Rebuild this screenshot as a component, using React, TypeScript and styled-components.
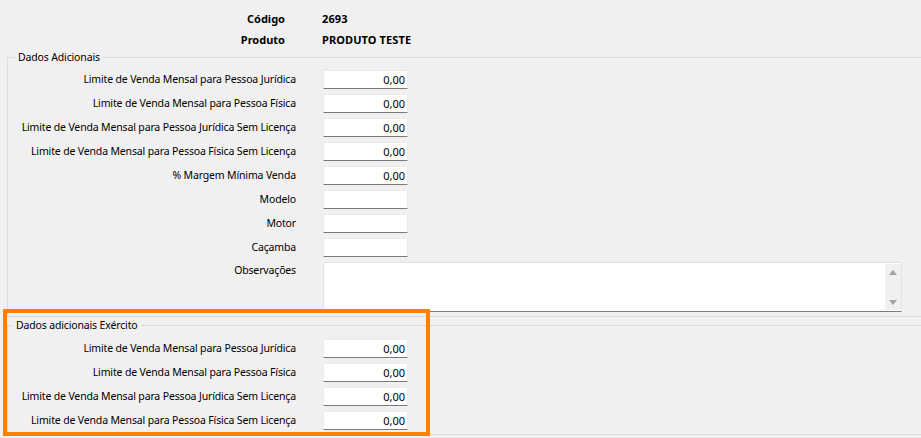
import React from "react";
import styled, { createGlobalStyle } from "styled-components";

const Global = createGlobalStyle`
  html, body { margin: 0; padding: 0; background: #f0f0f0; }
  body {
    font-family: "Segoe UI", "Noto Sans", "DejaVu Sans", sans-serif;
    font-size: 11px;
    color: #000;
  }
`;

const Page = styled.div`
  position: relative;
  width: 921px;
  height: 438px;
  overflow: hidden;
  background: #f0f0f0;
`;

const Header = styled.div`
  display: grid;
  grid-template-columns: 285px auto;
  column-gap: 37px;
  grid-auto-rows: 21px;
  align-items: center;
  padding-top: 8px;
  font-weight: bold;
  font-size: 11px;
`;

const HeaderLabel = styled.div`
  text-align: right;
`;

const HeaderValue = styled.div`
  text-align: left;
  letter-spacing: 0.1px;
`;

const Group = styled.fieldset<{ $mt: number; $pt: number }>`
  margin: ${(p) => p.$mt}px -40px 0 7px;
  padding: ${(p) => p.$pt}px 0 4px 0;
  border: 1px solid #dcdcdc;
  min-width: 0;
`;

const Legend = styled.legend<{ $ml: number }>`
  margin-left: ${(p) => p.$ml}px;
  padding: 0 3px;
  line-height: 14px;
  font-size: 10.5px;
  letter-spacing: -0.15px;
`;

const Form = styled.div`
  display: grid;
  grid-template-columns: 288px auto;
  column-gap: 27px;
  row-gap: 5px;
  align-items: center;
`;

const Label = styled.div<{ $top?: boolean }>`
  text-align: right;
  white-space: nowrap;
  font-size: 10.5px;
  letter-spacing: -0.15px;
  line-height: ${(p) => (p.$top ? "16px" : "19px")};
  align-self: ${(p) => (p.$top ? "start" : "center")};
`;

const TextBox = styled.div`
  box-sizing: border-box;
  width: 85px;
  height: 19px;
  background: #fff;
  border: 1px solid #ebebeb;
  border-bottom-color: #7a7a7a;
  padding: 0 2px 0 2px;
  text-align: right;
  line-height: 17px;
  font-size: 11px;
  white-space: nowrap;
`;

const Memo = styled.div`
  box-sizing: border-box;
  width: 579px;
  height: 50px;
  background: #fff;
  border: 1px solid #e3e3e3;
  border-bottom-color: #7a7a7a;
  display: flex;
  justify-content: flex-end;
  padding: 1px 0;
`;

const ScrollBar = styled.div`
  width: 16px;
  background: #f0f0f0;
  display: flex;
  flex-direction: column;
  justify-content: space-between;
  align-items: center;
  padding: 6px 0 5px;
  box-sizing: border-box;
`;

const Highlight = styled.div`
  position: absolute;
  left: 3px;
  top: 309px;
  width: 427px;
  height: 127px;
  box-sizing: border-box;
  border: 4px solid #ff8000;
  pointer-events: none;
`;

const Arrow = ({ down }: { down?: boolean }) => (
  <svg width="8" height="5" viewBox="0 0 8 5">
    <polygon points={down ? "0,0 8,0 4,5" : "4,0 8,5 0,5"} fill="#a3a3a3" />
  </svg>
);

type Field = { label: string; value?: string };

const dados: Field[] = [
  { label: "Limite de Venda Mensal para Pessoa Jurídica", value: "0,00" },
  { label: "Limite de Venda Mensal para Pessoa Física", value: "0,00" },
  { label: "Limite de Venda Mensal para Pessoa Jurídica Sem Licença", value: "0,00" },
  { label: "Limite de Venda Mensal para Pessoa Física Sem Licença", value: "0,00" },
  { label: "% Margem Mínima Venda", value: "0,00" },
  { label: "Modelo", value: "" },
  { label: "Motor", value: "" },
  { label: "Caçamba", value: "" },
];

const exercito: Field[] = [
  { label: "Limite de Venda Mensal para Pessoa Jurídica", value: "0,00" },
  { label: "Limite de Venda Mensal para Pessoa Física", value: "0,00" },
  { label: "Limite de Venda Mensal para Pessoa Jurídica Sem Licença", value: "0,00" },
  { label: "Limite de Venda Mensal para Pessoa Física Sem Licença", value: "0,00" },
];

const Rows = ({ fields }: { fields: Field[] }) => (
  <>
    {fields.map((f, i) => (
      <React.Fragment key={i}>
        <Label>{f.label}</Label>
        <TextBox>{f.value}</TextBox>
      </React.Fragment>
    ))}
  </>
);

export default function App() {
  return (
    <Page>
      <Global />
      <Header>
        <HeaderLabel>Código</HeaderLabel>
        <HeaderValue>2693</HeaderValue>
        <HeaderLabel>Produto</HeaderLabel>
        <HeaderValue>PRODUTO TESTE</HeaderValue>
      </Header>

      <Group $mt={0} $pt={6}>
        <Legend $ml={7}>Dados Adicionais</Legend>
        <Form>
          <Rows fields={dados} />
          <Label $top>Observações</Label>
          <Memo>
            <ScrollBar>
              <Arrow />
              <Arrow down />
            </ScrollBar>
          </Memo>
        </Form>
      </Group>

      <Group $mt={1} $pt={7}>
        <Legend $ml={5}>Dados adicionais Exército</Legend>
        <Form>
          <Rows fields={exercito} />
        </Form>
      </Group>

      <Highlight />
    </Page>
  );
}
